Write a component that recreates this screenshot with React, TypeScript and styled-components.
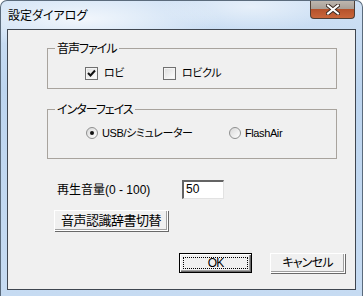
import React from 'react';
import styled, { createGlobalStyle } from 'styled-components';

const FONT = `"Liberation Sans", "Noto Sans CJK JP", sans-serif`;

const GlobalStyle = createGlobalStyle`
  html, body {
    margin: 0;
    padding: 0;
    background: #ffffff;
  }
  body {
    font-family: ${FONT};
    font-size: 12px;
    color: #000;
  }
`;

const Window = styled.div`
  width: 363px;
  height: 296px;
  box-sizing: border-box;
  border: 1px solid #5b6b7c;
  border-bottom: none;
  border-radius: 7px 7px 0 0;
  background:
    radial-gradient(ellipse 140px 30px at 80px 18px, rgba(255, 255, 255, 0.75), rgba(255, 255, 255, 0) 100%),
    radial-gradient(ellipse 90px 24px at 250px 6px, rgba(255, 255, 255, 0.5), rgba(255, 255, 255, 0) 100%),
    linear-gradient(#cfe1f5, #bdd5ef 30%, #c6dbf2);
  display: flex;
  flex-direction: column;
  overflow: hidden;
`;

const TitleBar = styled.div`
  height: 28px;
  flex: none;
  display: flex;
  justify-content: space-between;
  align-items: flex-start;
`;

const Title = styled.div`
  margin: 6px 0 0 7px;
  font-family: "Noto Sans CJK JP", sans-serif;
  font-feature-settings: "palt";
  font-size: 12px;
  line-height: 16px;
  color: #000;
`;

const CloseButton = styled.div`
  width: 45px;
  height: 19px;
  margin: -1px 7px 0 0;
  box-sizing: border-box;
  border: 1px solid #4f3f36;
  border-top: none;
  border-radius: 0 0 4px 4px;
  background: linear-gradient(#c1b9b1 0%, #a9a098 48%, #b5522c 52%, #c9663b 100%);
  display: flex;
  align-items: center;
  justify-content: center;
`;

const Client = styled.div`
  flex: 1;
  margin: 0 6px 6px 6px;
  border: 1px solid #3f4650;
  background: #f0f0f0;
  display: flex;
  flex-direction: column;
`;

const Group = styled.fieldset<{ $top: number; $h: number }>`
  margin: ${p => p.$top}px 0 0 39px;
  padding: 0;
  width: 290px;
  height: ${p => p.$h}px;
  box-sizing: border-box;
  border: 1px solid #a8a39d;
  min-inline-size: 0;
`;

const Legend = styled.legend`
  margin-left: 7px;
  padding: 0 2px;
  font-family: "Noto Sans CJK JP", sans-serif;
  font-feature-settings: "palt";
  font-size: 12px;
  letter-spacing: -1px;
  line-height: 16px;
`;

const OptionRow = styled.div<{ $pt: number; $pl: number }>`
  display: flex;
  align-items: center;
  padding: ${p => p.$pt}px 0 0 ${p => p.$pl}px;
`;

const Option = styled.label<{ $w?: number; $gap: number }>`
  display: flex;
  align-items: center;
  gap: ${p => p.$gap}px;
  width: ${p => (p.$w ? `${p.$w}px` : 'auto')};
  font-family: ${FONT};
  font-feature-settings: "palt";
  font-size: 11px;
  letter-spacing: -0.4px;
  line-height: 14px;
`;

const CheckBox = styled.span`
  width: 13px;
  height: 13px;
  box-sizing: border-box;
  border: 1px solid #707070;
  background: linear-gradient(135deg, #dcdcdc, #ffffff);
  box-shadow: inset 0 0 0 1px #f4f4f4;
  display: flex;
  align-items: center;
  justify-content: center;
  flex: none;
`;

const Radio = styled.span`
  width: 12px;
  height: 12px;
  box-sizing: border-box;
  border: 1px solid #8e8f8f;
  border-radius: 50%;
  background: linear-gradient(135deg, #d8d8d8, #ffffff);
  display: flex;
  align-items: center;
  justify-content: center;
  flex: none;
`;

const RadioDot = styled.span`
  width: 4px;
  height: 4px;
  border-radius: 50%;
  background: #111;
`;

const VolumeRow = styled.div`
  display: flex;
  align-items: center;
  margin-top: 21px;
  padding-left: 49px;
`;

const VolumeLabel = styled.span`
  width: 125px;
  font-family: ${FONT};
  font-size: 12px;
  line-height: 16px;
`;

const Kanji = styled.span`
  font-family: "Noto Sans CJK JP", sans-serif;
`;

const NumberBox = styled.div`
  width: 42px;
  height: 19px;
  box-sizing: border-box;
  border-style: solid;
  border-width: 2px 1px 1px 2px;
  border-color: #646464 #e2e2e2 #e2e2e2 #646464;
  background: #fff;
  font-family: ${FONT};
  font-size: 12px;
  line-height: 15px;
  padding-left: 2px;
`;

const Button = styled.div<{ $w: number; $h: number; $default?: boolean }>`
  width: ${p => p.$w}px;
  height: ${p => p.$h}px;
  box-sizing: border-box;
  background: #f0f0f0;
  border: 1px solid ${p => (p.$default ? '#000' : '#fff')};
  box-shadow: ${p =>
    p.$default
      ? 'inset 1px 1px 0 #fff, inset -1px -1px 0 #696969, inset -2px -2px 0 #a0a0a0'
      : 'inset -1px -1px 0 #a0a0a0, 1px 1px 0 #696969'};
  display: flex;
  align-items: center;
  justify-content: center;
  font-family: ${FONT};
  font-feature-settings: "palt";
  font-size: 12px;
  letter-spacing: -0.8px;
  line-height: 14px;
  position: relative;
`;

const FocusRing = styled.span`
  position: absolute;
  inset: 3px;
  border: 1px dotted #000;
`;

const ConvertButton = styled(Button)`
  margin: 11px 0 0 46px;
  font-size: 13px;
  letter-spacing: -0.5px;
`;

const ButtonRow = styled.div`
  display: flex;
  justify-content: flex-end;
  gap: 18px;
  margin: 22px 10px 0 0;
`;

const CheckMark = () => (
  <svg width="9" height="9" viewBox="0 0 9 9">
    <path d="M1 4 L3.5 6.5 L8 1.5" fill="none" stroke="#111" strokeWidth="2" />
  </svg>
);

const CloseX = () => (
  <svg width="14" height="11" viewBox="0 0 14 11">
    <path d="M2 1.5 L12 9.5 M12 1.5 L2 9.5" stroke="#3b2a22" strokeWidth="4" strokeLinecap="square" />
    <path d="M2 1.5 L12 9.5 M12 1.5 L2 9.5" stroke="#fff" strokeWidth="2" strokeLinecap="square" />
  </svg>
);

export default function App() {
  return (
    <>
      <GlobalStyle />
      <Window>
        <TitleBar>
          <Title>設定ダイアログ</Title>
          <CloseButton>
            <CloseX />
          </CloseButton>
        </TitleBar>
        <Client>
          <Group $top={10} $h={49}>
            <Legend>音声ファイル</Legend>
            <OptionRow $pt={10} $pl={37}>
              <Option $w={78} $gap={6}>
                <CheckBox>
                  <CheckMark />
                </CheckBox>
                ロビ
              </Option>
              <Option $gap={6}>
                <CheckBox />
                ロビクル
              </Option>
            </OptionRow>
          </Group>
          <Group $top={12} $h={58}>
            <Legend>インターフェイス</Legend>
            <OptionRow $pt={9} $pl={38}>
              <Option $w={143} $gap={4}>
                <Radio>
                  <RadioDot />
                </Radio>
                USB/シミュレーター
              </Option>
              <Option $gap={4}>
                <Radio />
                FlashAir
              </Option>
            </OptionRow>
          </Group>
          <VolumeRow>
            <VolumeLabel>
              <Kanji>再生音量</Kanji>(0 - 100)
            </VolumeLabel>
            <NumberBox>50</NumberBox>
          </VolumeRow>
          <ConvertButton $w={114} $h={21}>音声認識辞書切替</ConvertButton>
          <ButtonRow>
            <Button $w={73} $h={20} $default>
              <FocusRing />
              OK
            </Button>
            <Button $w={75} $h={20}>キャンセル</Button>
          </ButtonRow>
        </Client>
      </Window>
    </>
  );
}
